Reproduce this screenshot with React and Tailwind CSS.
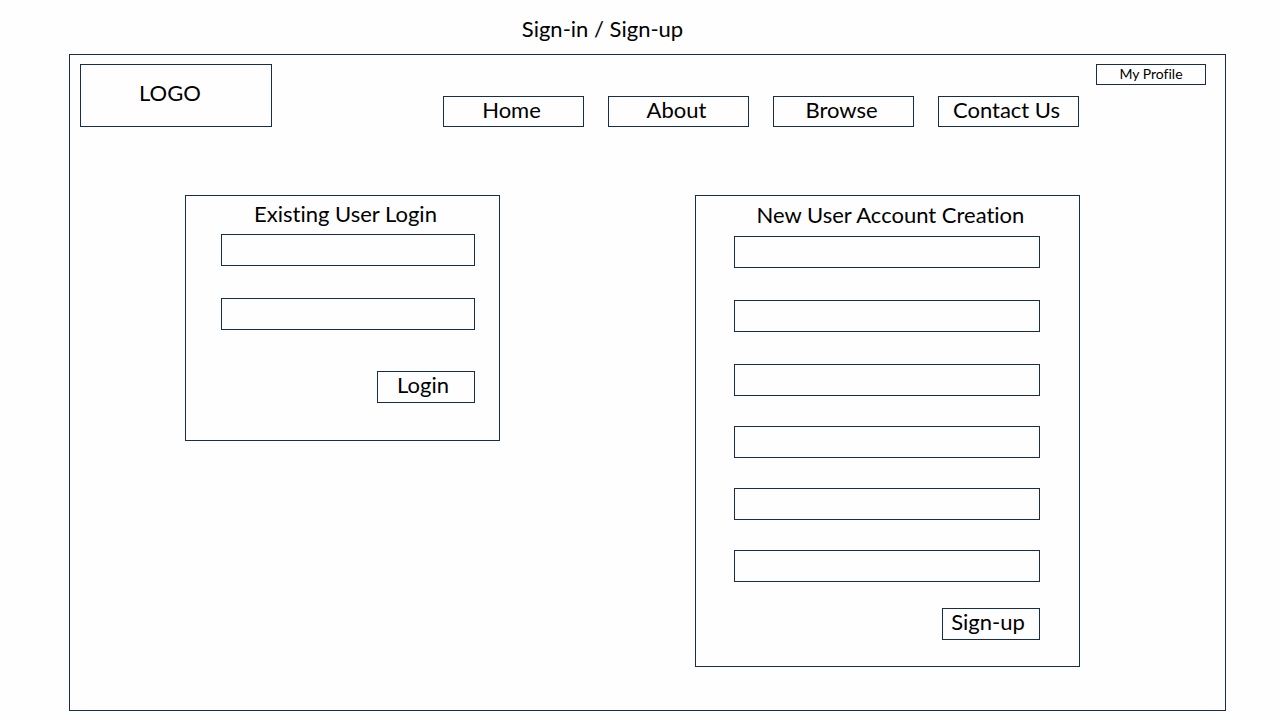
const navItems = ["Home", "About", "Browse", "Contact Us"];

const loginFields = [
  { name: "username", label: "Username", type: "text" },
  { name: "password", label: "Password", type: "password" },
];

const contactFields = [
  { name: "first-name", label: "First name", type: "text" },
  { name: "last-name", label: "Last name", type: "text" },
  { name: "email", label: "Email", type: "email" },
];

const accountFields = [
  { name: "new-username", label: "Username", type: "text" },
  { name: "new-password", label: "Password", type: "password" },
  { name: "confirm-password", label: "Confirm password", type: "password" },
];

function Field({ name, label, type }) {
  return (
    <input
      name={name}
      type={type}
      aria-label={label}
      className="block h-8 w-full border border-[#172c51] bg-transparent px-2 text-[22px]"
    />
  );
}

function SubmitButton({ children }) {
  return (
    <button
      type="submit"
      className="flex h-8 w-[98px] items-center justify-center self-end border border-[#172c51] pr-1.5 pb-1"
    >
      {children}
    </button>
  );
}

export default function App() {
  return (
    <div className="flex min-h-screen flex-col bg-[#fefefe] pr-[54px] pb-[9px] pl-[69px] font-['Lato',sans-serif] text-[22px] leading-7 text-black [font-variant-ligatures:none]">
      <h1 className="pt-[15px] pr-[90px] pb-[11px] text-center">Sign-in / Sign-up</h1>

      <div className="flex-1 border border-[#172c51]">
        <header className="flex items-start pt-[9px] pr-[19px] pl-[10px]">
          <a
            href="#"
            className="flex h-[63px] w-48 items-center justify-center border border-[#172c51] pr-3 pb-1.5"
          >
            LOGO
          </a>
          <nav className="ml-auto flex gap-6 self-end">
            {navItems.map((item) => (
              <a
                key={item}
                href="#"
                className="flex h-[31px] w-[141px] items-center justify-center border border-[#172c51] pr-1 pb-1"
              >
                {item}
              </a>
            ))}
          </nav>
          <a
            href="#"
            className="ml-[17px] flex h-[21px] w-[110px] items-center justify-center border border-[#172c51] pb-0.5 text-sm"
          >
            My Profile
          </a>
        </header>

        <main className="mt-[68px] flex items-start justify-between pr-[145px] pb-8 pl-[115px]">
          <section className="w-[315px] border border-[#172c51] pb-[37px]">
            <h2 className="pb-0.5 pl-1.5 text-center leading-9">Existing User Login</h2>
            <form className="flex flex-col pr-6 pl-[35px]">
              <div className="flex flex-col gap-8">
                {loginFields.map((field) => (
                  <Field key={field.name} {...field} />
                ))}
              </div>
              <div className="flex flex-col pt-[41px]">
                <SubmitButton>Login</SubmitButton>
              </div>
            </form>
          </section>

          <section className="w-[385px] border border-[#172c51] pb-[26px]">
            <h2 className="pb-0.5 pl-1.5 text-center leading-[38px]">New User Account Creation</h2>
            <form className="flex flex-col pr-[39px] pl-[38px]">
              <div className="flex flex-col gap-8">
                {contactFields.map((field) => (
                  <Field key={field.name} {...field} />
                ))}
              </div>
              <div className="flex flex-col gap-[30px] pt-[30px]">
                {accountFields.map((field) => (
                  <Field key={field.name} {...field} />
                ))}
              </div>
              <div className="flex flex-col pt-[26px]">
                <SubmitButton>Sign-up</SubmitButton>
              </div>
            </form>
          </section>
        </main>
      </div>
    </div>
  );
}
